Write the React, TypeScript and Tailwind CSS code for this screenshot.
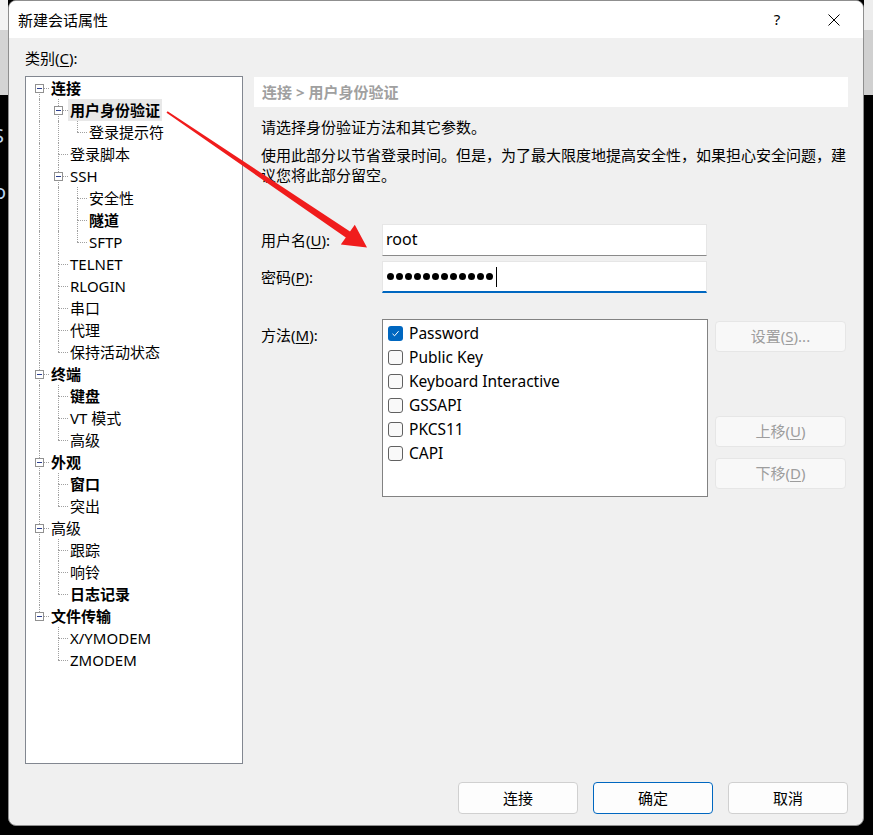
import React from "react";

type TNode = { label: string; bold?: boolean; selected?: boolean; children?: TNode[] };

const tree: TNode[] = [
  {
    label: "连接",
    bold: true,
    children: [
      { label: "用户身份验证", bold: true, selected: true, children: [{ label: "登录提示符" }] },
      { label: "登录脚本" },
      {
        label: "SSH",
        children: [{ label: "安全性" }, { label: "隧道", bold: true }, { label: "SFTP" }],
      },
      { label: "TELNET" },
      { label: "RLOGIN" },
      { label: "串口" },
      { label: "代理" },
      { label: "保持活动状态" },
    ],
  },
  {
    label: "终端",
    bold: true,
    children: [{ label: "键盘", bold: true }, { label: "VT 模式" }, { label: "高级" }],
  },
  {
    label: "外观",
    bold: true,
    children: [{ label: "窗口", bold: true }, { label: "突出" }],
  },
  {
    label: "高级",
    children: [{ label: "跟踪" }, { label: "响铃" }, { label: "日志记录", bold: true }],
  },
  {
    label: "文件传输",
    bold: true,
    children: [{ label: "X/YMODEM" }, { label: "ZMODEM" }],
  },
];

type Row = { node: TNode; level: number; isFirst: boolean; hasNext: boolean; anc: boolean[] };

function flatten(nodes: TNode[], level: number, anc: boolean[], out: Row[]) {
  nodes.forEach((n, i) => {
    const hasNext = i < nodes.length - 1;
    out.push({ node: n, level, isFirst: level === 0 && i === 0, hasNext, anc });
    if (n.children) flatten(n.children, level + 1, [...anc, hasNext], out);
  });
}

const rows: Row[] = [];
flatten(tree, 0, [], rows);

const dot = "absolute left-[9px] border-l border-dotted border-[#a0a0a0]";

function TreeRow({ r }: { r: Row }) {
  return (
    <div className="flex h-[22px] items-stretch">
      {r.anc.map((a, j) => (
        <div key={j} className="relative w-[19px] shrink-0">
          {a && <div className={`${dot} top-0 h-[22px]`} />}
        </div>
      ))}
      <div className="relative w-[19px] shrink-0">
        {!r.isFirst && <div className={`${dot} top-0 h-[11px]`} />}
        {r.hasNext && <div className={`${dot} top-[11px] h-[11px]`} />}
        <div className="absolute left-[9px] top-[11px] w-[10px] border-t border-dotted border-[#a0a0a0]" />
        {r.node.children && (
          <div className="absolute left-[5px] top-[7px] flex h-[9px] w-[9px] items-center justify-center border border-[#919191] bg-white">
            <div className="h-px w-[5px] bg-[#2c3f8f]" />
          </div>
        )}
      </div>
      <span
        className={`flex items-center px-[2px] text-[15px] leading-[20px] text-black ${
          r.node.bold ? "font-bold" : ""
        } ${r.node.selected ? "bg-[#e8e8e8]" : ""}`}
      >
        {r.node.label}
      </span>
    </div>
  );
}

function U({ c }: { c: string }) {
  return <span className="underline underline-offset-2">{c}</span>;
}

function Check({ on }: { on?: boolean }) {
  if (on)
    return (
      <div className="flex h-[15px] w-[15px] shrink-0 items-center justify-center rounded-[3px] bg-[#0067c0]">
        <svg width="9" height="9" viewBox="0 0 9 9">
          <path d="M1.5 4.8 L3.6 6.8 L7.6 2.2" fill="none" stroke="white" strokeWidth="1" />
        </svg>
      </div>
    );
  return <div className="h-[15px] w-[15px] shrink-0 rounded-[3px] border border-[#616161] bg-[#f9f9f9]" />;
}

const methods = [
  { label: "Password", on: true },
  { label: "Public Key" },
  { label: "Keyboard Interactive" },
  { label: "GSSAPI" },
  { label: "PKCS11" },
  { label: "CAPI" },
];

function SideBtn({ children, cls }: { children: React.ReactNode; cls?: string }) {
  return (
    <div
      className={`flex h-[31px] w-[131px] items-center justify-center rounded-[4px] border border-[#e6e6e6] bg-[#f8f8f8] text-[15px] text-[#9d9d9d] ${
        cls || ""
      }`}
    >
      {children}
    </div>
  );
}

function BottomBtn({ children, primary }: { children: React.ReactNode; primary?: boolean }) {
  return (
    <div
      className={`flex h-[32px] w-[120px] items-center justify-center rounded-[4px] border bg-[#fdfdfd] text-[15px] text-black ${
        primary ? "border-[#0067c0]" : "border-[#d0d0d0]"
      }`}
    >
      {children}
    </div>
  );
}

export default function App() {
  return (
    <div
      className="relative h-[835px] w-[873px] overflow-hidden bg-black pl-[8px]"
      style={{ fontFamily: '"Noto Sans", "Noto Sans CJK SC", sans-serif' }}
    >
      {/* desktop behind window */}
      <div className="absolute left-0 top-0 h-[30px] w-[8px] bg-[#f3f3f3]" />
      <div className="absolute left-0 top-[30px] h-[65px] w-[8px] bg-[#d4d4d4]" />
      <div className="absolute right-0 top-0 h-[30px] w-[9px] bg-[#ededed]" />
      <div className="absolute right-0 top-[30px] h-[65px] w-[9px] bg-[#d0d0d0]" />
      <span className="absolute left-[-7px] top-[124px] text-[20px] leading-[24px] text-[#bcd6f2]">S</span>
      <span className="absolute left-[-6px] top-[180px] text-[20px] leading-[24px] text-[#bcd6f2]">o</span>

      <div className="relative flex h-[826px] w-[856px] flex-col overflow-hidden rounded-[8px] border border-[#8f8f8f] bg-[#f0f0f0]">
        {/* title bar */}
        <div className="flex h-[37px] shrink-0 items-center bg-white pl-[9px]">
          <span className="text-[15px] leading-[20px] text-black">新建会话属性</span>
          <div className="flex-1" />
          <div className="flex h-[37px] w-[46px] items-center justify-center text-[15px] text-black">?</div>
          <div className="ml-[11px] mr-[6px] flex h-[37px] w-[46px] items-center justify-center">
            <svg width="12" height="12" viewBox="0 0 12 12">
              <path d="M0.5 0.5 L11.5 11.5 M11.5 0.5 L0.5 11.5" stroke="#000" strokeWidth="1" />
            </svg>
          </div>
        </div>

        {/* body */}
        <div className="flex flex-1 flex-col pl-[16px] pt-[10px] pb-[11px] pr-[15px]">
          <div className="text-[15px] leading-[20px] text-black">
            类别(<U c="C" />):
          </div>
          <div className="mt-[8px] flex">
            <div className="h-[688px] w-[218px] shrink-0 border border-[#828790] bg-white pl-[4px]">
              {rows.map((r, i) => (
                <TreeRow key={i} r={r} />
              ))}
            </div>

            <div className="ml-[11px] mt-px flex w-[594px] flex-col text-[15px] text-black">
              <div className="flex h-[30px] items-center bg-white pl-[8px] font-bold leading-[20px] text-[#a0a0a0]">
                连接 &gt; 用户身份验证
              </div>
              <p className="mt-[10px] pl-[7px] leading-[20px]">请选择身份验证方法和其它参数。</p>
              <p className="mt-[8px] pl-[7px] leading-[20px]">
                使用此部分以节省登录时间。但是，为了最大限度地提高安全性，如果担心安全问题，建议您将此部分留空。
              </p>

              <div className="mt-[39px] flex h-[32px] items-center">
                <div className="w-[128px] shrink-0 pl-[7px] leading-[20px]">
                  用户名(<U c="U" />):
                </div>
                <div className="flex h-[32px] w-[325px] items-center border border-b-[#8a8a8a] border-x-[#e6e6e6] border-t-[#e6e6e6] bg-white pb-[3px] pl-[3px] text-[16px]">
                  root
                </div>
              </div>
              <div className="mt-[5px] flex h-[32px] items-center">
                <div className="w-[128px] shrink-0 pl-[7px] leading-[20px]">
                  密码(<U c="P" />):
                </div>
                <div className="flex h-[32px] w-[325px] items-center gap-[2px] border-x border-t border-[#e6e6e6] border-b-2 border-b-[#0067c0] bg-white pl-[4px]">
                  {Array.from({ length: 12 }).map((_, i) => (
                    <div key={i} className="h-[7px] w-[7px] rounded-full bg-black" />
                  ))}
                  <div className="ml-[1px] h-[20px] w-px bg-black" />
                </div>
              </div>

              <div className="mt-[26px] flex items-start">
                <div className="w-[128px] shrink-0 pl-[7px] pt-[6px] leading-[20px]">
                  方法(<U c="M" />):
                </div>
                <div className="h-[178px] w-[326px] shrink-0 border border-[#828282] bg-white pl-[5px] pt-px">
                  {methods.map((m) => (
                    <div key={m.label} className="flex h-[24px] items-center gap-[6px]">
                      <Check on={m.on} />
                      <span className="text-[15.5px] leading-[20px]">{m.label}</span>
                    </div>
                  ))}
                </div>
                <div className="ml-[7px] mt-[2px] flex flex-col">
                  <SideBtn>
                    设置(<U c="S" />)...
                  </SideBtn>
                  <SideBtn cls="mt-[64px]">
                    上移(<U c="U" />)
                  </SideBtn>
                  <SideBtn cls="mt-[11px]">
                    下移(<U c="D" />)
                  </SideBtn>
                </div>
              </div>
            </div>
          </div>

          <div className="mt-[18px] flex justify-end gap-[15px]">
            <BottomBtn>连接</BottomBtn>
            <BottomBtn primary>确定</BottomBtn>
            <BottomBtn>取消</BottomBtn>
          </div>
        </div>
      </div>

      {/* red annotation arrow */}
      <svg className="pointer-events-none absolute left-0 top-0" width="873" height="835" viewBox="0 0 873 835">
        <polygon
          points="166.5,112.8 345.8,237.5 340.8,244.5 367,247.5 354.8,224.8 350.0,231.6 167.6,111.2"
          fill="#f01c1c"
        />
      </svg>
    </div>
  );
}
